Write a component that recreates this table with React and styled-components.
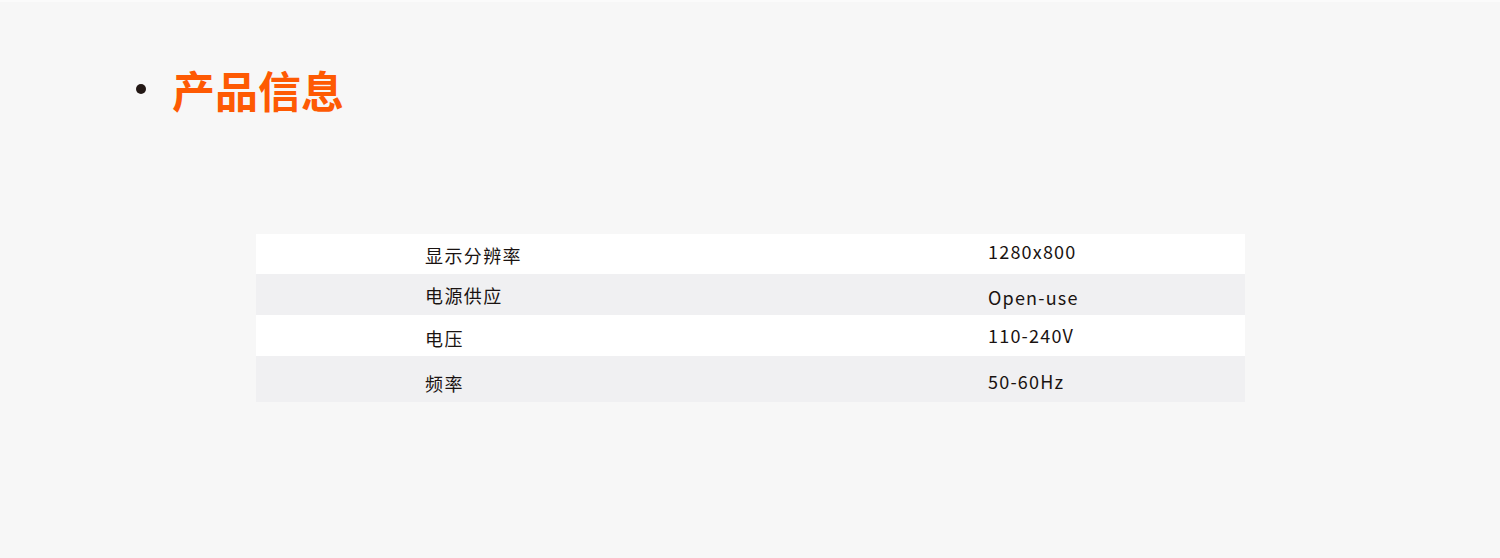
import styled, { createGlobalStyle } from "styled-components";

const GlobalStyle = createGlobalStyle`
  html, body {
    margin: 0;
    padding: 0;
    background: #f7f7f7;
  }
  body {
    font-family: "Noto Sans CJK SC", "Noto Sans", sans-serif;
    color: #231815;
  }
`;

// 规格参数 (labelY / valueY 用来微调文字的上下位置)
const SPECS = [
  { label: "显示分辨率", value: "1280x800", h: 40, labelY: 1, valueY: -3 },
  { label: "电源供应", value: "Open-use", h: 41, labelY: 0, valueY: 2 },
  { label: "电压", value: "110-240V", h: 41, labelY: 2, valueY: -1 },
  { label: "频率", value: "50-60Hz", h: 46, labelY: 4, valueY: 2 },
];

const App = () => {
  return (
    <>
      <GlobalStyle />
      <Page>
        <Header>
          <Dot />
          <Title>产品信息</Title>
        </Header>
        <Table>
          {SPECS.map((row, i) => (
            <Row key={row.label} $striped={i % 2 === 1} $height={row.h}>
              <Label $dy={row.labelY}>{row.label}</Label>
              <Value $dy={row.valueY}>{row.value}</Value>
            </Row>
          ))}
        </Table>
      </Page>
    </>
  );
};

export default App;

const Page = styled.div`
  width: 1500px;
  height: 558px;
  box-sizing: border-box;
  border-top: 2px solid #fbfbfb;
  padding-top: 65px;
  display: flex;
  flex-direction: column;
`;

const Header = styled.div`
  display: flex;
  align-items: center;
  padding-left: 136px;
  gap: 26px;
  height: 44px;
`;

const Dot = styled.span`
  width: 10px;
  height: 10px;
  border-radius: 50%;
  background: #231815;
  margin-top: 0;
`;

const Title = styled.h1`
  margin: 0;
  font-size: 43px;
  line-height: 44px;
  font-weight: 700;
  color: #fe5a03;
`;

const Table = styled.div`
  margin: 123px 0 0 256px;
  width: 989px;
  display: flex;
  flex-direction: column;
`;

const Row = styled.div`
  display: grid;
  grid-template-columns: 563px 1fr;
  align-items: center;
  height: ${({ $height }) => $height}px;
  padding-left: 169px;
  background: ${({ $striped }) => ($striped ? "#f0f0f2" : "#ffffff")};
  font-size: 18px;
  line-height: 24px;
  color: #1a1311;
`;

const Label = styled.span`
  position: relative;
  top: ${({ $dy }) => $dy}px;
  white-space: nowrap;
  letter-spacing: 1.4px;
`;

const Value = styled.span`
  position: relative;
  top: ${({ $dy }) => $dy}px;
  white-space: nowrap;
  letter-spacing: 1.2px;
`;
